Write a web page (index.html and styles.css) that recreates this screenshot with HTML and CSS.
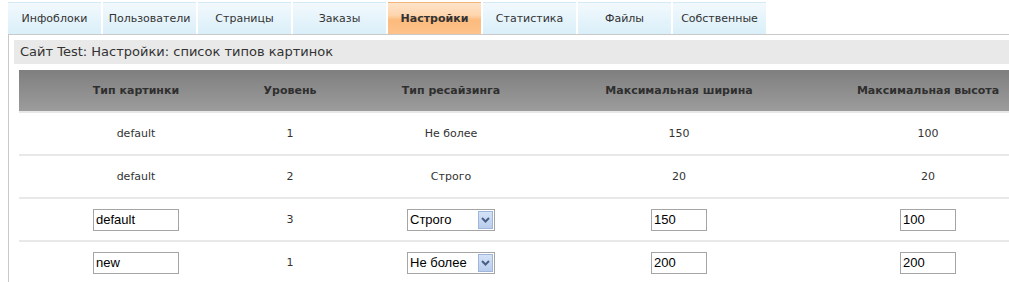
FILE: index.html
```html
<!DOCTYPE html>
<html lang="ru">
<head>
  <meta charset="UTF-8">
  <title>Настройки: список типов картинок</title>
  <link rel="stylesheet" href="styles.css">
</head>
<body>
  <div class="tabs">
    <a href="#" class="tab">Инфоблоки</a>
    <a href="#" class="tab">Пользователи</a>
    <a href="#" class="tab">Страницы</a>
    <a href="#" class="tab">Заказы</a>
    <a href="#" class="tab active">Настройки</a>
    <a href="#" class="tab">Статистика</a>
    <a href="#" class="tab">Файлы</a>
    <a href="#" class="tab">Собственные</a>
  </div>

  <div class="content">
    <div class="caption">Сайт Test: Настройки: список типов картинок</div>

    <table class="grid">
      <colgroup>
        <col class="c-type">
        <col class="c-level">
        <col class="c-resize">
        <col class="c-width">
        <col class="c-height">
      </colgroup>
      <thead>
        <tr>
          <th>Тип картинки</th>
          <th>Уровень</th>
          <th>Тип ресайзинга</th>
          <th>Максимальная ширина</th>
          <th>Максимальная высота</th>
        </tr>
      </thead>
      <tbody>
        <tr>
          <td>default</td>
          <td>1</td>
          <td>Не более</td>
          <td>150</td>
          <td>100</td>
        </tr>
        <tr>
          <td>default</td>
          <td>2</td>
          <td>Строго</td>
          <td>20</td>
          <td>20</td>
        </tr>
        <tr>
          <td><input type="text" class="field" value="default"></td>
          <td>3</td>
          <td>
            <span class="select-wrap">
              <select class="select">
                <option>Строго</option>
                <option>Не более</option>
              </select>
              <span class="select-btn"><svg width="9" height="6" viewBox="0 0 9 6"><path d="M1 1 L4.5 4.5 L8 1" fill="none" stroke="#4b5f86" stroke-width="2"/></svg></span>
            </span>
          </td>
          <td><input type="text" class="field num" value="150"></td>
          <td><input type="text" class="field num" value="100"></td>
        </tr>
        <tr>
          <td><input type="text" class="field" value="new"></td>
          <td>1</td>
          <td>
            <span class="select-wrap">
              <select class="select">
                <option>Не более</option>
                <option>Строго</option>
              </select>
              <span class="select-btn"><svg width="9" height="6" viewBox="0 0 9 6"><path d="M1 1 L4.5 4.5 L8 1" fill="none" stroke="#4b5f86" stroke-width="2"/></svg></span>
            </span>
          </td>
          <td><input type="text" class="field num" value="200"></td>
          <td><input type="text" class="field num" value="200"></td>
        </tr>
      </tbody>
    </table>
  </div>
</body>
</html>
```

FILE: styles.css
```css
html, body { overflow: hidden; }
body {
  margin: 2px 0 0 8px;
  font-family: "DejaVu Sans", Verdana, sans-serif;
  font-size: 11px;
  color: #333;
  background: #fff;
}

/* tabs */
.tabs {
  display: flex;
  gap: 2px;
  border-bottom: 1px solid #c9c9c9;
}
.tab {
  width: 93px;
  height: 31px;
  line-height: 31px;
  border-top: 1px solid #d3eaf6;
  background: linear-gradient(#f2f9fd, #daeff9);
  text-align: center;
  color: #333;
  text-decoration: none;
}
.tab.active {
  border-top-color: #f3b47a;
  background: linear-gradient(#fee4ca 0%, #fed5ad 40%, #fdbb7e 55%, #fdc28b 100%);
  font-weight: bold;
}

/* content */
.content {
  border-left: 1px solid #c9c9c9;
  padding: 5px 0 0 5px;
  min-height: 260px;
}
.caption {
  height: 24px;
  line-height: 24px;
  padding-left: 6px;
  background: #e9e9e9;
  font-size: 13px;
  color: #333;
  white-space: nowrap;
}

/* table */
.grid {
  margin: 6px 0 0 5px;
  border-collapse: collapse;
  table-layout: fixed;
  width: 1054px;
}
.c-type { width: 234px; }
.c-level { width: 74px; }
.c-resize { width: 248px; }
.c-width { width: 208px; }
.c-height { width: 290px; }

.grid th {
  height: 41px;
  padding: 0;
  background: linear-gradient(#7f7f7f, #9c9c9c);
  border-bottom: 2px solid #e8e8e8;
  font-weight: bold;
  color: #2f2f2f;
  white-space: nowrap;
}
.grid td {
  height: 41px;
  padding: 0;
  text-align: center;
  border-bottom: 2px solid #e8e8e8;
}

.field {
  box-sizing: border-box;
  width: 86px;
  height: 22px;
  margin: 0;
  padding: 0 2px;
  border: 1px solid #a5a5a5;
  font-family: "Liberation Sans", Arial, sans-serif;
  font-size: 13px;
  color: #000;
  vertical-align: middle;
}
.field.num { width: 56px; }

.select-wrap {
  position: relative;
  display: inline-block;
  vertical-align: middle;
}
.select {
  box-sizing: border-box;
  width: 88px;
  height: 22px;
  margin: 0;
  padding: 0 0 0 2px;
  border: 1px solid #a5a5a5;
  border-radius: 0;
  background: #fff;
  -webkit-appearance: none;
  appearance: none;
  font-family: "Liberation Sans", Arial, sans-serif;
  font-size: 13px;
  color: #000;
  display: block;
}
.select-btn {
  position: absolute;
  top: 2px;
  right: 2px;
  width: 13px;
  height: 16px;
  border: 1px solid #9fb6dc;
  background: linear-gradient(#d3e2f7, #b9cdec);
  display: flex;
  align-items: center;
  justify-content: center;
}
```
